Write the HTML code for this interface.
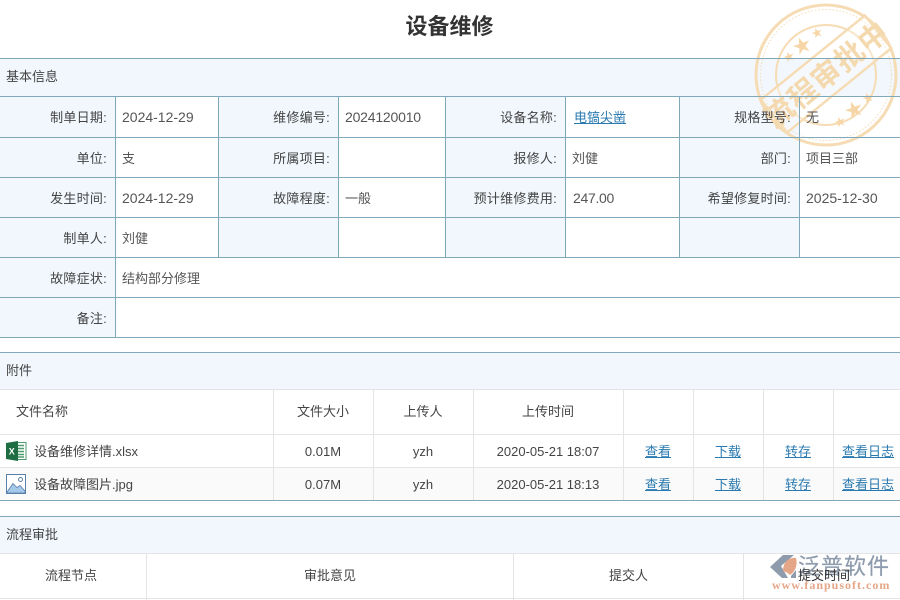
<!DOCTYPE html>
<html lang="zh"><head><meta charset="utf-8"><title>设备维修</title>
<style>
html,body{margin:0;padding:0;background:#fff}
#p{position:relative;width:900px;height:600px;overflow:hidden;background:#fff;font-family:"Liberation Sans","Noto Sans CJK SC",sans-serif;font-size:13px;color:#555}
#p div{position:absolute}
.h{height:1px;left:0;width:900px;background:#7fa9ba}
.v{width:1px;background:#7fa9ba}
.g{background:#e4e4e4}
.b{background:#f1f7fd}
.l,.t,.c,.a,.k{height:20px;line-height:24px;white-space:nowrap}
.l{text-align:right;color:#444;letter-spacing:.25px}
.t{color:#555}
#p .n{font-size:14px;line-height:20px}
.c{text-align:center;color:#444}
.k{color:#444}
.a{text-align:center;color:#2a7ab0;text-decoration:underline}
</style></head><body><div id="p">
<div style="left:0;top:12px;width:899px;height:30px;line-height:30px;text-align:center;font-size:22px;font-weight:bold;color:#333">设备维修</div>

<div class="b" style="left:0;top:58px;width:900px;height:38px"></div>
<div class="b" style="left:0;top:96px;width:115px;height:241px"></div>
<div class="b" style="left:219px;top:96px;width:119px;height:161px"></div>
<div class="b" style="left:446px;top:96px;width:119px;height:161px"></div>
<div class="b" style="left:680px;top:96px;width:119px;height:161px"></div>

<svg style="position:absolute;left:750px;top:0" width="150" height="156" viewBox="750 0 150 156">
<g fill="none" stroke="#f6dcb4">
<circle cx="826" cy="75" r="70" stroke-width="3"/>
<circle cx="826" cy="75" r="65.500" stroke-width="1" stroke-dasharray="1.500 2"/>
<circle cx="826" cy="75" r="50" stroke-width="2"/>
</g>
<g transform="rotate(-39 826 74)">
<rect x="759" y="53" width="134" height="42" fill="#fff" fill-opacity=".3" stroke="#f6dcb4" stroke-width="2.500"/>
<text x="826" y="85" text-anchor="middle" font-size="29" font-weight="bold" letter-spacing="1" fill="#f4d9ae" font-family="Liberation Sans,Noto Sans CJK SC,sans-serif">流程审批中</text>
</g>
<g fill="#f6d6a6">
<path transform="translate(802 46) rotate(-20) scale(9)" d="M0-1L.225-.31L.95-.31L.36.12L.59.81L0,.38L-.59.81L-.36.12L-.95-.31L-.225-.31Z"/>
<path transform="translate(817 33) rotate(-20) scale(5.500)" d="M0-1L.225-.31L.95-.31L.36.12L.59.81L0,.38L-.59.81L-.36.12L-.95-.31L-.225-.31Z"/>
<path transform="translate(789 57) rotate(-20) scale(5.500)" d="M0-1L.225-.31L.95-.31L.36.12L.59.81L0,.38L-.59.81L-.36.12L-.95-.31L-.225-.31Z"/>
<path transform="translate(854 110) rotate(-20) scale(9)" d="M0-1L.225-.31L.95-.31L.36.12L.59.81L0,.38L-.59.81L-.36.12L-.95-.31L-.225-.31Z"/>
<path transform="translate(840 122) rotate(-20) scale(5.500)" d="M0-1L.225-.31L.95-.31L.36.12L.59.81L0,.38L-.59.81L-.36.12L-.95-.31L-.225-.31Z"/>
<path transform="translate(868 98) rotate(-20) scale(5.500)" d="M0-1L.225-.31L.95-.31L.36.12L.59.81L0,.38L-.59.81L-.36.12L-.95-.31L-.225-.31Z"/>
</g>
</svg>

<div class="h" style="top:58px"></div><div class="h" style="top:96px"></div><div class="h" style="top:137px"></div><div class="h" style="top:177px"></div><div class="h" style="top:217px"></div><div class="h" style="top:257px"></div><div class="h" style="top:297px"></div><div class="h" style="top:337px"></div>
<div class="v" style="left:115px;top:96px;height:241px"></div>
<div class="v" style="left:218px;top:96px;height:161px"></div>
<div class="v" style="left:338px;top:96px;height:161px"></div>
<div class="v" style="left:445px;top:96px;height:161px"></div>
<div class="v" style="left:565px;top:96px;height:161px"></div>
<div class="v" style="left:679px;top:96px;height:161px"></div>
<div class="v" style="left:799px;top:96px;height:161px"></div>

<div class="k" style="left:6px;top:65px">基本信息</div>

<div class="l" style="left:0;width:107px;top:106px">制单日期:</div><div class="t n" style="left:122px;top:107px">2024-12-29</div>
<div class="l" style="left:219px;width:111px;top:106px">维修编号:</div><div class="t n" style="left:345px;top:107px;letter-spacing:-.2px">2024120010</div>
<div class="l" style="left:446px;width:111px;top:106px">设备名称:</div><div class="t" style="left:574px;top:106px;color:#2a7ab0;text-decoration:underline">电镐尖凿</div>
<div class="l" style="left:680px;width:111px;top:106px">规格型号:</div><div class="t" style="left:806px;top:106px">无</div>

<div class="l" style="left:0;width:107px;top:147px">单位:</div><div class="t" style="left:122px;top:147px">支</div>
<div class="l" style="left:219px;width:111px;top:147px">所属项目:</div>
<div class="l" style="left:446px;width:111px;top:147px">报修人:</div><div class="t" style="left:572px;top:147px">刘健</div>
<div class="l" style="left:680px;width:111px;top:147px">部门:</div><div class="t" style="left:806px;top:147px">项目三部</div>

<div class="l" style="left:0;width:107px;top:187px">发生时间:</div><div class="t n" style="left:122px;top:188px">2024-12-29</div>
<div class="l" style="left:219px;width:111px;top:187px">故障程度:</div><div class="t" style="left:345px;top:187px">一般</div>
<div class="l" style="left:446px;width:111px;top:187px">预计维修费用:</div><div class="t n" style="left:573px;top:188px;letter-spacing:-.3px">247.00</div>
<div class="l" style="left:680px;width:111px;top:187px">希望修复时间:</div><div class="t n" style="left:806px;top:188px">2025-12-30</div>

<div class="l" style="left:0;width:107px;top:227px">制单人:</div><div class="t" style="left:122px;top:227px">刘健</div>
<div class="l" style="left:0;width:107px;top:267px">故障症状:</div><div class="t" style="left:122px;top:267px">结构部分修理</div>
<div class="l" style="left:0;width:107px;top:307px">备注:</div>

<div class="b" style="left:0;top:352px;width:900px;height:37px"></div>
<div class="h" style="top:352px"></div>
<div class="h g" style="top:389px"></div><div class="h g" style="top:434px"></div><div class="h g" style="top:467px"></div>
<div class="h" style="top:500px"></div>
<div style="left:0;top:468px;width:900px;height:32px;background:#fafafa"></div>
<div class="v g" style="left:273px;top:390px;height:110px"></div>
<div class="v g" style="left:373px;top:390px;height:110px"></div>
<div class="v g" style="left:473px;top:390px;height:110px"></div>
<div class="v g" style="left:623px;top:390px;height:110px"></div>
<div class="v g" style="left:693px;top:390px;height:110px"></div>
<div class="v g" style="left:763px;top:390px;height:110px"></div>
<div class="v g" style="left:833px;top:390px;height:110px"></div>

<div class="k" style="left:6px;top:359px">附件</div>
<div class="k" style="left:16px;top:400px">文件名称</div>
<div class="c" style="left:273px;width:100px;top:400px">文件大小</div>
<div class="c" style="left:373px;width:100px;top:400px">上传人</div>
<div class="c" style="left:473px;width:150px;top:400px">上传时间</div>

<svg style="position:absolute;left:5px;top:440px" width="22" height="22" viewBox="0 0 22 22">
<rect x="8" y="2.500" width="13" height="17" fill="#fff" stroke="#4e9a6e"/>
<path d="M13 5.500h6M13 8.500h6M13 11.500h6M13 14.500h6M13 17h6" stroke="#4e9a6e" stroke-width="1.600"/>
<path d="M1 3L13 1V21L1 19Z" fill="#1f6e43"/>
<text x="3.800" y="14.500" font-size="9" font-weight="bold" fill="#fff" font-family="Liberation Sans">X</text>
</svg>
<div class="k" style="left:34px;top:440px">设备维修详情.xlsx</div>
<div class="c" style="left:273px;width:100px;top:440px">0.01M</div>
<div class="c" style="left:373px;width:100px;top:440px">yzh</div>
<div class="c" style="left:473px;width:150px;top:440px">2020-05-21 18:07</div>
<div class="a" style="left:623px;width:70px;top:440px">查看</div>
<div class="a" style="left:693px;width:70px;top:440px">下载</div>
<div class="a" style="left:763px;width:70px;top:440px">转存</div>
<div class="a" style="left:833px;width:70px;top:440px">查看日志</div>

<svg style="position:absolute;left:5px;top:473px" width="22" height="22" viewBox="0 0 22 22">
<rect x="1.500" y="1.500" width="19" height="19" fill="#fff" stroke="#5a7fa8"/>
<path d="M2 19L8 10.500L12 14.500L15 12.500L20 18V20H2Z" fill="#a3c8ea" stroke="#5a7fa8" stroke-width=".8"/>
<circle cx="15.500" cy="6.500" r="2" fill="#fff" stroke="#5a7fa8"/>
</svg>
<div class="k" style="left:34px;top:473px">设备故障图片.jpg</div>
<div class="c" style="left:273px;width:100px;top:473px">0.07M</div>
<div class="c" style="left:373px;width:100px;top:473px">yzh</div>
<div class="c" style="left:473px;width:150px;top:473px">2020-05-21 18:13</div>
<div class="a" style="left:623px;width:70px;top:473px">查看</div>
<div class="a" style="left:693px;width:70px;top:473px">下载</div>
<div class="a" style="left:763px;width:70px;top:473px">转存</div>
<div class="a" style="left:833px;width:70px;top:473px">查看日志</div>

<div class="b" style="left:0;top:516px;width:900px;height:37px"></div>
<div class="h" style="top:516px"></div>
<div class="h g" style="top:553px"></div><div class="h g" style="top:598px"></div>
<div class="v g" style="left:146px;top:553px;height:47px"></div>
<div class="v g" style="left:513px;top:553px;height:47px"></div>
<div class="v g" style="left:743px;top:553px;height:47px"></div>
<div class="k" style="left:6px;top:523px">流程审批</div>
<div class="c" style="left:0;width:142px;top:564px">流程节点</div>
<div class="c" style="left:147px;width:366px;top:564px">审批意见</div>
<div class="c" style="left:514px;width:229px;top:564px">提交人</div>

<svg style="position:absolute;left:765px;top:550px" width="36" height="32" viewBox="765 550 36 32">
<path d="M770 567L783 555H794L781 566L788 578H782Z" fill="#8d9bad"/>
<path d="M783 571C783 562 789 557 796 558C798 565 795 572 790 575C788 573 786 572 783 571Z" fill="#e5a587"/>
<path d="M791 576L796 570V578H791Z" fill="#8d9bad"/>
</svg>
<div style="left:798px;top:553px;height:28px;line-height:28px;font-size:22px;letter-spacing:1px;color:#8d9bad;white-space:nowrap;-webkit-text-stroke:.2px #8d9bad">泛普软件</div>
<div style="left:772px;top:578px;height:14px;line-height:14px;font-family:'Liberation Serif',serif;font-size:12px;font-weight:bold;letter-spacing:1px;color:#e5a587;white-space:nowrap">www.fanpusoft.com</div>
<div class="c" style="left:744px;width:160px;top:564px;color:#333">提交时间</div>
</div></body></html>
